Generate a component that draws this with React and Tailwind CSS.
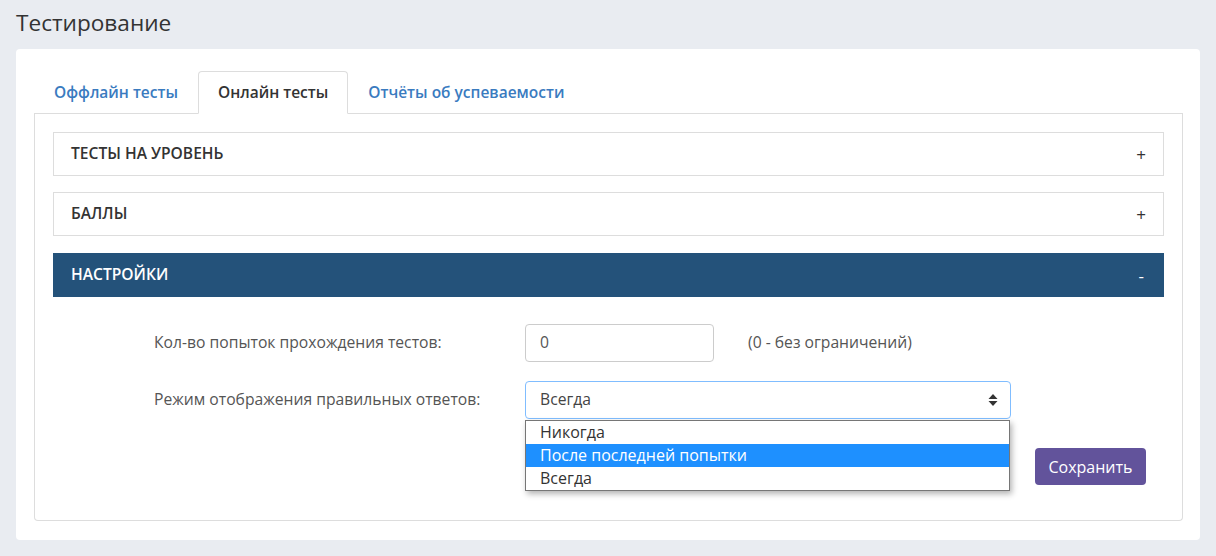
import React from 'react';

const tabs = ['Оффлайн тесты', 'Онлайн тесты', 'Отчёты об успеваемости'];
const options = ['Никогда', 'После последней попытки', 'Всегда'];

const PanelHead = ({ title, sign, active }) => (
  <div
    className={
      active
        ? 'flex h-[44px] items-center justify-between bg-[#24527a] pl-[18px] pr-[20px] text-white'
        : 'flex h-[44px] items-center justify-between border border-[#dddddd] bg-white pl-[17px] pr-[17px] text-[#333]'
    }
  >
    <span className="text-[15.6px] font-semibold uppercase">{title}</span>
    <span className="text-[17px] leading-none">{sign}</span>
  </div>
);

const App = () => {
  return (
    <div className="min-h-[556px] bg-[#e9ecf1] pt-[6px] pb-[17px] font-['Open_Sans',sans-serif]">
      {/* Title */}
      <h1 className="mx-4 mb-[9px] h-[34px] text-[22.6px] leading-[34px] text-[#333]">Тестирование</h1>

      <div className="mx-4 rounded-[4px] bg-white pt-[22px] pb-[19px] pl-[18px] pr-[17px]">
        {/* Tabs */}
        <ul className="flex border-b border-[#dddddd]">
          {tabs.map((t, i) => (
            <li key={t} className="-mb-px">
              <a
                className={
                  i === 1
                    ? 'flex h-[43px] items-center rounded-t-[4px] border border-[#dddddd] border-b-white bg-white px-[19px] text-[15.5px] font-semibold text-[#333]'
                    : 'flex h-[43px] items-center border border-transparent px-[19px] text-[15.5px] font-semibold text-[#3a7bbf]'
                }
              >
                {t}
              </a>
            </li>
          ))}
        </ul>

        {/* Tab content */}
        <div className="h-[407px] rounded-b-[4px] border-x border-b border-[#dddddd] p-[18px]">
          <PanelHead title="Тесты на уровень" sign="+" />
          <div className="h-[16px]" />
          <PanelHead title="Баллы" sign="+" />
          <div className="h-[17px]" />
          <PanelHead title="Настройки" sign="-" active />

          {/* Settings */}
          <div className="pl-[101px] pt-[27px]">
            <div className="flex items-center">
              <label className="w-[371px] text-[15.7px] text-[#555]">Кол-во попыток прохождения тестов:</label>
              <div className="flex h-[38px] w-[189px] items-center rounded-[4px] border border-[#cccccc] pl-[14px] text-[15.7px] text-[#555]">
                0
              </div>
              <span className="ml-[34px] text-[15.7px] text-[#555]">(0 - без ограничений)</span>
            </div>

            <div className="mt-[19px] flex items-center">
              <label className="w-[371px] text-[15.7px] text-[#555]">Режим отображения правильных ответов:</label>
              <div className="relative">
                <div className="flex h-[38px] w-[486px] items-center justify-between rounded-[4px] border border-[#80bdff] pl-[14px] pr-[12px] text-[15.7px] text-[#444]">
                  <span>Всегда</span>
                  <svg width="10" height="14" viewBox="0 0 10 14" fill="#333">
                    <path d="M5 1 L9.5 6 H0.5 Z" />
                    <path d="M5 13 L9.5 8 H0.5 Z" />
                  </svg>
                </div>
                <ul className="absolute left-0 top-[39px] z-10 w-[485px] border border-[#767676] bg-white shadow-[2px_3px_6px_rgba(0,0,0,0.3)]">
                  {options.map((o, i) => (
                    <li
                      key={o}
                      className={
                        i === 1
                          ? 'h-[23px] bg-[#1e90ff] pl-[14px] text-[16px] leading-[23px] text-white'
                          : 'h-[23px] pl-[14px] text-[16px] leading-[23px] text-[#333]'
                      }
                    >
                      {o}
                    </li>
                  ))}
                </ul>
              </div>
            </div>

            <div className="mt-[29px] flex justify-end pr-[18px]">
              <button className="h-[37px] w-[111px] rounded-[4px] bg-[#62539b] text-[16px] text-white">
                Сохранить
              </button>
            </div>
          </div>
        </div>
      </div>
    </div>
  );
};

export default App;
